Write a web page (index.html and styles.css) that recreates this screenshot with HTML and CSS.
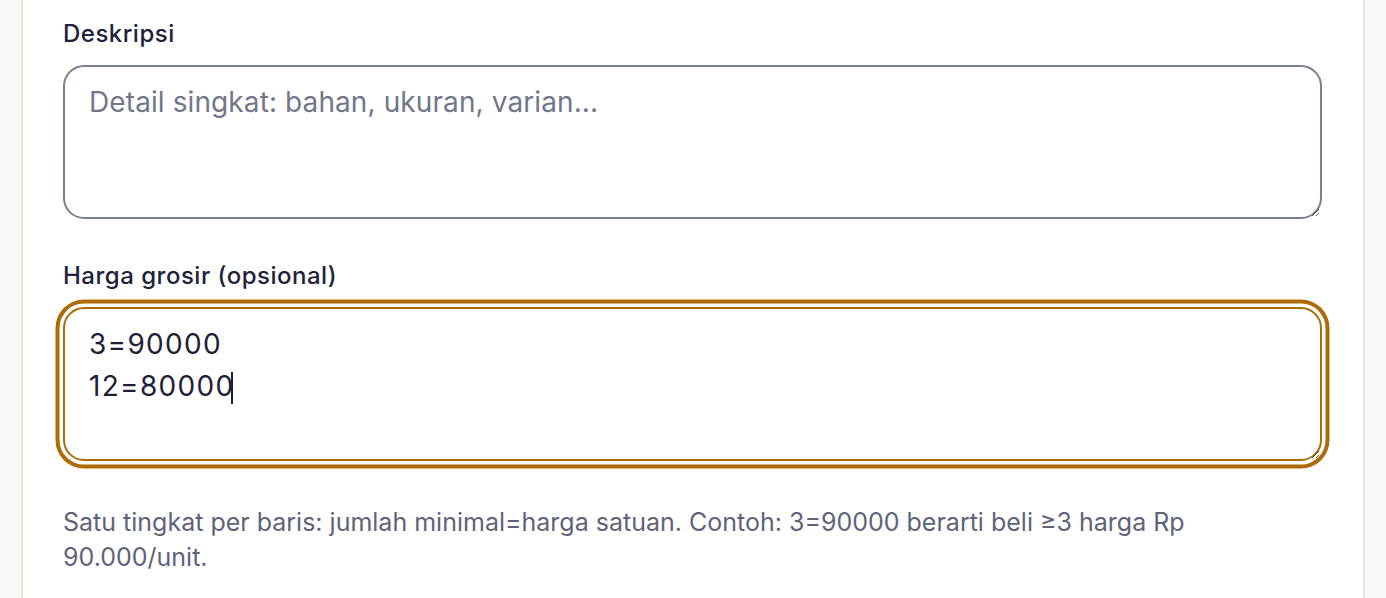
FILE: index.html
```html
<!DOCTYPE html>
<html lang="id">
<head>
    <meta charset="UTF-8">
    <meta name="viewport" content="width=device-width, initial-scale=1.0">
    <title>Tambah Produk</title>
    <link rel="stylesheet" href="styles.css">
</head>
<body>
    <main class="card">
        <div class="field">
            <label class="field-label" for="deskripsi">Deskripsi</label>
            <textarea id="deskripsi" class="field-input" rows="3" placeholder="Detail singkat: bahan, ukuran, varian..."></textarea>
        </div>

        <div class="field">
            <label class="field-label" for="grosir">Harga grosir (opsional)</label>
            <div class="input-wrap">
                <textarea id="grosir" class="field-input is-focused" rows="3">3=90000
12=80000</textarea>
                <span class="caret"></span>
            </div>
            <p class="field-help">Satu tingkat per baris: jumlah minimal=harga satuan. Contoh: 3=90000 berarti beli ≥3 harga Rp 90.000/unit.</p>
        </div>
    </main>
</body>
</html>
```

FILE: styles.css
```css
/* Base */
* {
    margin: 0;
    padding: 0;
    box-sizing: border-box;
}

body {
    font-family: 'Inter', 'Noto Sans', sans-serif;
    background: #f9f8f4;
    color: #1f2036;
    min-height: 100vh;
    overflow: hidden;
}

/* Card */
.card {
    width: 1344px;
    margin-left: 21px;
    min-height: 100vh;
    background: #ffffff;
    border-left: 2px solid #e7e4dd;
    border-right: 2px solid #e7e4dd;
    padding: 15.5px 41px 40px 40px;
}

/* Form fields */
.field + .field {
    margin-top: 39px;
}

.field-label {
    display: block;
    font-size: 24px;
    line-height: 35px;
    font-weight: 500;
    letter-spacing: 0.5px;
    color: #20213a;
    margin-bottom: 14px;
}

.input-wrap {
    position: relative;
}

.field-input {
    display: block;
    width: 100%;
    font-family: inherit;
    font-size: 28px;
    line-height: 42px;
    letter-spacing: 1.3px;
    color: #1f2036;
    background: #ffffff;
    border: 2px solid #7b7e93;
    border-radius: 21px;
    padding: 14px 24px 10px;
    resize: vertical;
    outline: none;
}

.field-input::placeholder {
    color: #73768b;
    letter-spacing: 0.1px;
}

.field-input.is-focused {
    border-color: #ad6b08;
    box-shadow: 0 0 0 3.5px #ffffff, 0 0 0 7.5px #ad6b08;
}

/* Fake text caret, the page is captured without blinking */
.caret {
    position: absolute;
    left: 168px;
    top: 65px;
    width: 2px;
    height: 32px;
    background: #1f2036;
}

.field-help {
    margin-top: 44px;
    font-size: 25px;
    line-height: 35px;
    color: #5f6379;
}
```
